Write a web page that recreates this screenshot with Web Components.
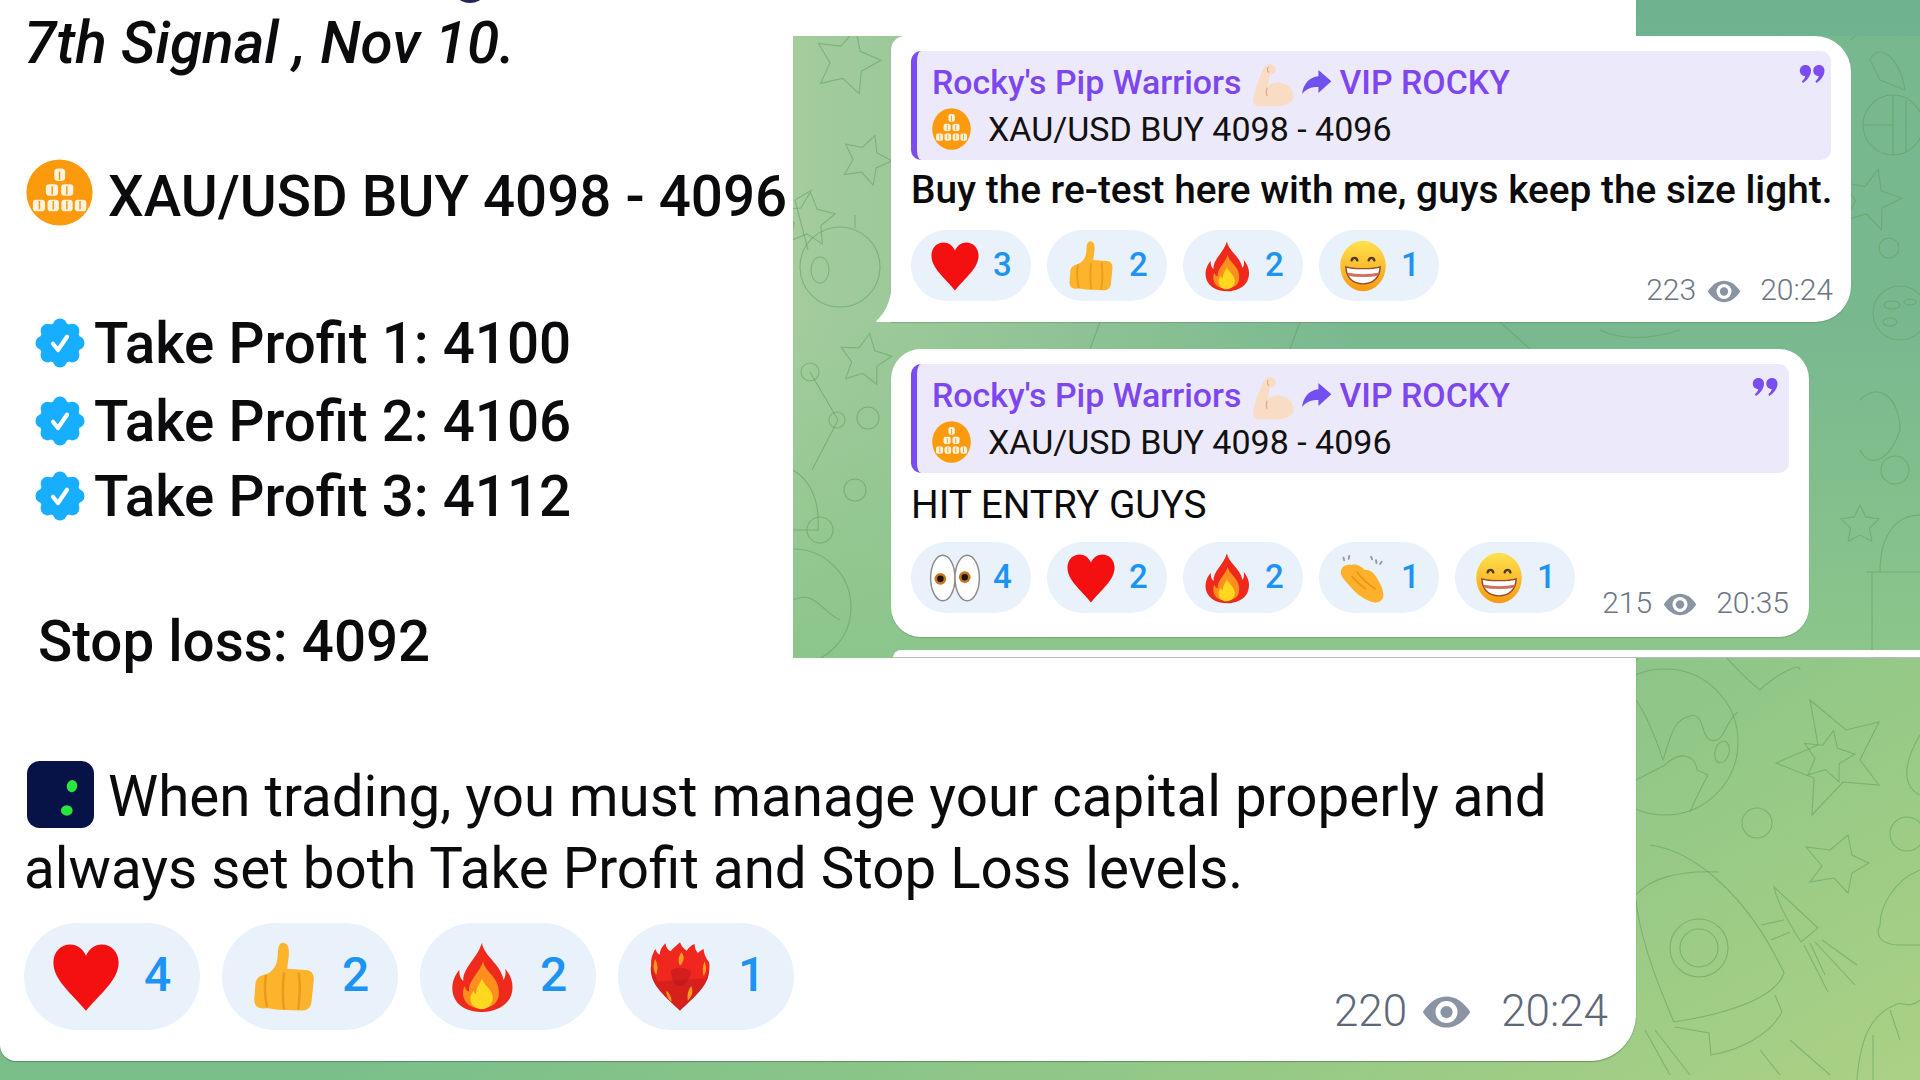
<!DOCTYPE html>
<html>
<head>
<meta charset="utf-8">
<title>7th Signal</title>
<style>
  html, body { margin: 0; padding: 0; background: #8cc58b; overflow: hidden; }
  body { font-family: Roboto, "Liberation Sans", sans-serif; }
</style>
</head>
<body>
<app-stage>
  <signal-bubble>
    <text-line slot="lines" gap="17" pad="24" top="7" size="58.500" style="font-style:italic;font-weight:500"><span>7th Signal , Nov 10.</span></text-line>
    <text-line slot="lines" gap="15" pad="26" top="82" size="56.500" style="font-weight:500"><emoji-icon name="gold" style="--w:67px;--h:67px;margin-bottom:9px"></emoji-icon><span>XAU/USD BUY 4098 - 4096</span></text-line>
    <text-line slot="lines" gap="9" pad="35" top="75" size="56.500" style="font-weight:500"><emoji-icon name="verified" style="--w:50px;--h:50px;margin-bottom:3px"></emoji-icon><span>Take Profit 1: 4100</span></text-line>
    <text-line slot="lines" gap="9" pad="35" top="6" size="56.500" style="font-weight:500"><emoji-icon name="verified" style="--w:50px;--h:50px;margin-bottom:3px"></emoji-icon><span>Take Profit 2: 4106</span></text-line>
    <text-line slot="lines" gap="9" pad="35" top="3" size="56.500" style="font-weight:500"><emoji-icon name="verified" style="--w:50px;--h:50px;margin-bottom:3px"></emoji-icon><span>Take Profit 3: 4112</span></text-line>
    <text-line slot="lines" gap="0" pad="38" top="73" size="56.500" style="font-weight:500"><span>Stop loss: 4092</span></text-line>
    <note-text slot="note"><emoji-icon name="dots" style="--w:67px;--h:67px"></emoji-icon> When trading, you must manage your capital properly and always set both Take Profit and Stop Loss levels.</note-text>
    <reaction-chip slot="chips" size="big" icon="heart" count="4"></reaction-chip>
    <reaction-chip slot="chips" size="big" icon="thumb" count="2"></reaction-chip>
    <reaction-chip slot="chips" size="big" icon="fire" count="2"></reaction-chip>
    <reaction-chip slot="chips" size="big" icon="heartfire" count="1"></reaction-chip>
    <view-meta slot="meta" views="220" time="20:24" size="big"></view-meta>
  </signal-bubble>

  <quoted-panel slot="over">
    <chat-bubble tail style="--bubble-w:960px;--bubble-h:286px;--text-weight:500;--text-top:9px;--chip-top:19px;--meta-top:45px;--meta-right:-2px;--rad:14px 36px 36px 0">
      <reply-box slot="reply" style="--quote-right:6px"></reply-box>
      <span slot="text">Buy the re-test here with me, guys keep the size light.</span>
      <reaction-chip slot="chips" icon="heart" count="3"></reaction-chip>
      <reaction-chip slot="chips" icon="thumb" count="2"></reaction-chip>
      <reaction-chip slot="chips" icon="fire" count="2"></reaction-chip>
      <reaction-chip slot="chips" icon="grin" count="1"></reaction-chip>
      <view-meta slot="meta" views="223" time="20:24"></view-meta>
    </chat-bubble>
    <chat-bubble style="--bubble-w:918px;--bubble-h:288px;--text-weight:400;--text-top:11px;--chip-top:16px;--meta-top:46px;--rad:30px;--gap-top:27px">
      <reply-box slot="reply" style="--quote-right:11px"></reply-box>
      <span slot="text">HIT ENTRY GUYS</span>
      <reaction-chip slot="chips" icon="eyes" count="4"></reaction-chip>
      <reaction-chip slot="chips" icon="heart" count="2"></reaction-chip>
      <reaction-chip slot="chips" icon="fire" count="2"></reaction-chip>
      <reaction-chip slot="chips" icon="clap" count="1"></reaction-chip>
      <reaction-chip slot="chips" icon="grin" count="1"></reaction-chip>
      <view-meta slot="meta" views="215" time="20:35"></view-meta>
    </chat-bubble>
  </quoted-panel>
</app-stage>

<script>
// all emoji artwork lives here, every one on a 32x32 box
const EMOJI = {
  heart: `<path fill="#f41010" d="M16 31C10 23.500 1.500 17.500 1.500 9.500 1.500 4.700 5 1.500 9 1.500c3 0 5.600 1.800 7 5 1.400-3.200 4-5 7-5 4 0 7.500 3.200 7.500 8C30.500 17.500 22 23.500 16 31Z"/>`,
  thumb: `<path fill="#fdb42c" d="M15.500.8c2.300 0 3 2.500 2.600 6l-.7 5.500 8.400.6c2.700.2 3.700 2.300 3.400 4.800l-1 9.500c-.3 2.700-2.200 3.800-4.600 3.700l-10.600-.4c-1.600-.1-2.600-.5-4.500-.6C5 30.200 2.600 29.500 2.800 25.500l.5-6.500c.2-2.500 2-3.500 4-4 3.200-.9 5.700-3.800 5.900-8.500.1-3 .4-5.700 2.300-5.700Z"/><path fill="none" stroke="#ea9a1e" stroke-width="1.100" d="M16 14c-.6 5-.7 11 0 16.500M22.500 14c.8 5 .6 11-.2 16.500M8 15c-.7 4-.5 10 .5 14.500"/>`,
  fire: `<path fill="#ef2a1c" d="M16 .8c.8 6 8 9 9.600 16.500 1-1.800 1-3.500.7-5 3.200 3.500 4.200 8.500 2.300 12.700C26.700 29 21.500 31.500 16 31.500 10 31.500 5 29 3.400 24.500 1.800 20 3.600 15.500 6 12.800c-.2 2 .3 3.800 1.700 5C7.300 12 13.800 8 16 .8Z"/><path fill="#ff8f1c" d="M16.500 9c.5 4 5 6 6.500 10.500 1 3.800.5 6.500-1.500 8.500-3 2.500-8.500 2.500-11.500.3-2.500-2-3-5.300-1.800-8.300.3 1.200.9 2 2 2.500C9.800 17.500 15 14 16.500 9Z"/><path fill="#ffd81f" d="M16 16.500c.5 2.800 4.200 4.500 4.800 8 .4 3.500-2.200 5.800-5 5.800s-5.300-2-4.900-5.300c.2-1.300.7-2.200 1.500-3 .1.800.4 1.400 1 1.700-.2-3 1.700-4.700 2.600-7.200Z"/>`,
  heartfire: `<path fill="#d6201c" d="M16 31C10 25 3 20 3 12.500 3 9 5.500 6.500 9 6.500c3 0 5.600 1.500 7 4 1.400-2.500 4-4 7-4 3.500 0 6 2.500 6 6C29 20 22 25 16 31Z"/><path fill="#f0271e" d="M4 13C2 9 4 5.500 5 3.500c.5 1.200 1 2 2 2.500 0-2 1-3.500 2.500-5 .3 2 1.200 3 2.200 3.500C13 3 14.500 2 16 .5c.6 1.800 1.800 3 3 3.800.8-1.200 1.600-2.300 3.500-3 0 1.700.5 3 1.500 4 .8-.7 1.500-1.200 2.500-1.700 0 2 1 4 2.500 6 .4 3-.5 5-2 7L6 18Z"/><path fill="#ff9b20" d="M16.500 5c1.700 1.500 1.500 4-.5 6-1-2-.7-4 .5-6ZM5 8c1 2 1.500 4 .5 7C4 13 4 10.500 5 8ZM27 9c.7 2.500 1 4.500-.5 6.500C25.800 13 26 11 27 9ZM21 20c1 2.300.5 4.500-1.500 6.500-.5-2.500 0-4.700 1.500-6.500ZM10 22c1.500 1.500 2.200 3 2.300 5-1.600-1.200-2.500-3-2.300-5Z"/><path fill="#b8161a" d="M12 13c3-1.500 6-1.500 9 .5-.5 3-2.500 6-5 6.500s-4-3.500-4-7Z" opacity=".5"/>`,
  grin: `<ellipse cx="16" cy="16" rx="14" ry="15.500" fill="url(#grinfill)"/><defs><linearGradient id="grinfill" x1="0" y1="0" x2="0" y2="1"><stop offset="0" stop-color="#ffe24e"/><stop offset="1" stop-color="#f79a12"/></linearGradient></defs><path fill="none" stroke="#4e3a1c" stroke-width="1.500" stroke-linecap="round" d="M9 12.500c.6-2 2.900-2 3.500 0M19.500 12.500c.6-2 2.900-2 3.500 0"/><path fill="#fff" stroke="#9a4a28" stroke-width=".900" d="M5.500 16.500c4 1.500 17 1.500 21 0 0 6.500-4.200 10.500-10.500 10.500S5.500 23 5.500 16.500Z"/><path fill="none" stroke="#d0705c" stroke-width="1.600" d="M6.700 21c5 1.200 13.600 1.200 18.600 0"/>`,
  eyes: `<ellipse cx="8.500" cy="16" rx="7.500" ry="14" fill="#fff" stroke="#8c8c8c" stroke-width=".900"/><ellipse cx="23.500" cy="16" rx="7.500" ry="14" fill="#fff" stroke="#8c8c8c" stroke-width=".900"/><circle cx="7" cy="16.500" r="3.600" fill="#c5771c"/><circle cx="7" cy="16.500" r="2" fill="#1e1208"/><circle cx="22" cy="15.500" r="3.600" fill="#c5771c"/><circle cx="22" cy="15.500" r="2" fill="#1e1208"/>`,
  clap: `<path fill="#fdb02a" d="M2.500 11C3.500 8.500 6 7.500 9 8c3-1 6 1 8 3 3-.5 6 2 7.500 5 2 3 3.500 6 4 9.500.5 3.500-2 6-5.500 5.500-5-1-10.500-4.500-15-10C5 17.500 1.500 14.500 2.500 11Z"/><path fill="none" stroke="#e8941c" stroke-width="1" d="M12 12c3 4 7 8 12 11M9 15c3 3 6 6 9 8"/><path fill="none" stroke="#9a9a9a" stroke-width="1.200" stroke-linecap="round" d="M4 3.500l.4 1.600M7.500 2.500l-.3 1.700M24 5l.3 1.800M27.500 6l-1 1.400M21 3l.6 1.500"/>`,
  muscle: `<path fill="#f9dcc4" d="M13 1C16 .3 19 2 18.500 5 18 7.500 16 8.500 14.500 8.500L13 17c3-2.500 6-3.200 9.500-2.500 5 1 8.500 5 8.500 9.500 0 5-5 7.500-12 7.500H8c-3.500 0-5.500-2-5-5.500C4 19 7 11 9.500 5.500 10 3.500 11.500 1.500 13 1Z"/><path fill="none" stroke="#dba985" stroke-width=".800" d="M13.500 3c-1 1-1 3 .5 4M12.500 18c-.6 2-.6 4 0 6"/>`,
  gold: `<circle cx="16" cy="16" r="15.800" fill="#fc9a0e"/><g fill="#fff3df"><rect x="13.500" y="4.500" width="5.200" height="6" rx="1.800"/><rect x="9.500" y="12" width="5.800" height="5.500" rx="1.500"/><rect x="16.800" y="12" width="5.800" height="5.500" rx="1.500"/><rect x="3.300" y="19.500" width="5.800" height="5.500" rx="1.500"/><rect x="10.300" y="19.500" width="5.400" height="5.500" rx="1.500"/><rect x="16.900" y="19.500" width="5.400" height="5.500" rx="1.500"/><rect x="23.300" y="19.500" width="5.500" height="5.500" rx="1.500"/></g><g fill="none" stroke="#fc9a0e" stroke-width=".700"><path d="M16 6v4M12.500 13v4M19.500 13v4M6.400 20v4M13 20v4M19.500 20v4M25.800 20v4"/></g>`,
  verified: `<g fill="#17aeff"><circle cx="16" cy="16" r="13.200"/><circle cx="16" cy="4.800" r="4.500"/><circle cx="23.900" cy="8.100" r="4.500"/><circle cx="27.200" cy="16" r="4.500"/><circle cx="23.900" cy="23.900" r="4.500"/><circle cx="16" cy="27.200" r="4.500"/><circle cx="8.100" cy="23.900" r="4.500"/><circle cx="4.800" cy="16" r="4.500"/><circle cx="8.100" cy="8.100" r="4.500"/></g><path fill="none" stroke="#fff" stroke-width="2.700" stroke-linecap="round" stroke-linejoin="round" d="M11.500 16.500l3.200 4 5.800-8.500"/>`,
  dots: `<rect width="32" height="32" rx="6" fill="#071247"/><ellipse cx="21.500" cy="12" rx="2.500" ry="2.900" fill="#2be53f" transform="rotate(15 21.500 12)"/><ellipse cx="19" cy="23.600" rx="2.800" ry="2.500" fill="#2be53f"/>`
};

class EmojiIcon extends HTMLElement {
  connectedCallback() {
    const name = this.getAttribute('name');
    this.attachShadow({ mode: 'open' }).innerHTML = `
      <style>
        :host { display: inline-block; flex: none; width: var(--w, 32px); height: var(--h, 32px); line-height: 0; }
        svg { width: 100%; height: 100%; display: block; }
      </style>
      <svg viewBox="0 0 32 32" preserveAspectRatio="none">${EMOJI[name] || ''}</svg>`;
  }
}
customElements.define('emoji-icon', EmojiIcon);

class TextLine extends HTMLElement {
  connectedCallback() {
    const a = (n) => this.getAttribute(n);
    this.attachShadow({ mode: 'open' }).innerHTML = `
      <style>
        :host { display: flex; align-items: center; height: 72px; color: #0b0b0d; white-space: nowrap;
                gap: ${a('gap')}px; padding-left: ${a('pad')}px; margin-top: ${a('top')}px; font-size: ${a('size')}px; }
      </style><slot></slot>`;
  }
}
customElements.define('text-line', TextLine);

class NoteText extends HTMLElement {
  constructor() {
    super();
    this.attachShadow({ mode: 'open' }).innerHTML = `
      <style>
        :host { display: block; font-size: 56.500px; line-height: 72px; color: #0b0b0d; margin-top: 83px; padding: 0 28px 0 24px; }
        ::slotted(emoji-icon) { vertical-align: -12px; margin: 0 0 0 3px; }
      </style><slot></slot>`;
  }
}
customElements.define('note-text', NoteText);

class ReactionChip extends HTMLElement {
  connectedCallback() {
    const big = this.getAttribute('size') === 'big';
    const icon = this.getAttribute('icon');
    const count = this.getAttribute('count');
    this.attachShadow({ mode: 'open' }).innerHTML = `
      <style>
        :host { display: flex; align-items: center; flex: none; background: #e9f1fb;
                width: ${big ? 176 : 120}px; height: ${big ? 107 : 71}px; border-radius: ${big ? 54 : 36}px;
                padding-left: ${big ? 26 : 18}px; box-sizing: border-box; }
        emoji-icon { --w: ${big ? 72 : 52}px; --h: ${big ? 72 : 52}px; }
        span { margin: 0 0 ${big ? 4 : 2}px ${big ? 22 : 12}px; color: #1d93f3; font-weight: 500; font-size: ${big ? 48 : 33}px; line-height: 1; }
      </style>
      <emoji-icon name="${icon}"></emoji-icon><span>${count}</span>`;
  }
}
customElements.define('reaction-chip', ReactionChip);

class ViewMeta extends HTMLElement {
  connectedCallback() {
    const big = this.getAttribute('size') === 'big';
    this.attachShadow({ mode: 'open' }).innerHTML = `
      <style>
        :host { display: flex; align-items: center; color: ${big ? '#5d6879' : '#6b7585'}; font-weight: 300; white-space: nowrap;
                font-size: ${big ? 44 : 30}px; line-height: 1; }
        svg { width: ${big ? 49 : 34}px; height: ${big ? 34 : 23}px; margin: 2px ${big ? 30 : 19}px 0 ${big ? 15 : 11}px; }
      </style>
      <span>${this.getAttribute('views')}</span>
      <svg viewBox="0 0 32 22"><path fill="#8a94a3" d="M.5 11C5 4 10.500.8 16 .8S27 4 31.500 11C27 18 21.500 21.200 16 21.200S5 18 .5 11Z"/><circle cx="16" cy="11" r="7.200" fill="#fff"/><circle cx="16" cy="11" r="4" fill="#8a94a3"/></svg>
      <span>${this.getAttribute('time')}</span>`;
  }
}
customElements.define('view-meta', ViewMeta);

class ReplyBox extends HTMLElement {
  connectedCallback() {
    this.attachShadow({ mode: 'open' }).innerHTML = `
      <style>
        :host { display: block; position: relative; background: #ece9fa; border-left: 6px solid #7c4cf3; border-radius: 10px;
                height: 109px; box-sizing: border-box; padding: 11px 0 0 15px; white-space: nowrap; }
        .name { display: flex; align-items: center; height: 40px; color: #7d46ef; font-size: 33.900px; font-weight: 500; }
        .name emoji-icon { --w: 46px; --h: 44px; margin: 5px 6px 0 8px; }
        .name svg { width: 31px; height: 26px; margin-right: 7px; }
        .msg { display: flex; align-items: center; height: 42px; margin-top: 6px; color: #111; font-size: 34px; }
        .msg emoji-icon { --w: 39px; --h: 42px; margin-right: 17px; }
        .quote { position: absolute; top: 14px; right: var(--quote-right, 6px); width: 26px; height: 18px; fill: #7c4cf3; }
      </style>
      <div class="name"><span>Rocky's Pip Warriors</span><emoji-icon name="muscle"></emoji-icon><svg viewBox="0 0 24 20"><path fill="#7150ef" d="M13.500.8 23.500 9.500 13.500 18.500V13.800C8 13.800 4 15.200.8 19.200 1.800 11.500 6.500 6 13.500 5.500Z"/></svg><span>VIP ROCKY</span></div>
      <div class="msg"><emoji-icon name="gold"></emoji-icon><span>XAU/USD BUY 4098 - 4096</span></div>
      <svg class="quote" viewBox="0 0 26 18"><path d="M6.500 0C10 0 12 2.500 12 5.500 12 10.500 8.500 15 4 18L2.800 16.200C4.800 14.500 6 12.800 6.300 11 2.800 11 .8 8.500.8 5.500S3 0 6.500 0ZM20 0c3.500 0 5.500 2.500 5.500 5.500 0 5-3.500 9.500-8 12.500l-1.200-1.800c2-1.700 3.200-3.400 3.500-5.200-3.500 0-5.500-2.500-5.500-5.500S16.500 0 20 0Z"/></svg>`;
  }
}
customElements.define('reply-box', ReplyBox);

class ChatBubble extends HTMLElement {
  constructor() {
    super();
    this.attachShadow({ mode: 'open' }).innerHTML = `
      <style>
        :host { display: block; position: relative; box-sizing: border-box; background: #fff;
                width: var(--bubble-w); height: var(--bubble-h); margin-top: var(--gap-top, 0);
                border-radius: var(--rad); padding: 15px 20px 0; box-shadow: 0 1px 1px rgba(40,90,50,.25); }
        .text { font-size: 38.800px; line-height: 42px; color: #0b0b0d; margin-top: var(--text-top); white-space: nowrap;
                font-weight: var(--text-weight); height: 42px; }
        .bottom { display: flex; align-items: flex-start; justify-content: space-between; margin-top: var(--chip-top); }
        .chips { display: flex; gap: 16px; }
        .meta { margin-top: var(--meta-top); margin-right: var(--meta-right, 0); }
        .tail { display: none; position: absolute; left: -15px; bottom: 0; width: 16px; height: 36px; }
        :host([tail]) .tail { display: block; }
      </style>
      <slot name="reply"></slot>
      <div class="text"><slot name="text"></slot></div>
      <div class="bottom">
        <div class="chips"><slot name="chips"></slot></div>
        <div class="meta"><slot name="meta"></slot></div>
      </div>
      <svg class="tail" viewBox="0 0 16 36"><path fill="#fff" d="M16 0V36H1C.2 36 0 35 .6 34.400 8 28 14 18 16 0Z"/></svg>`;
  }
}
customElements.define('chat-bubble', ChatBubble);

// doodle wallpaper helpers, coordinates are page coordinates
function star(cx, cy, r, rot = 0, inner = 0.45) {
  let pts = [];
  for (let i = 0; i < 10; i++) {
    const a = (rot + i * 36 - 90) * Math.PI / 180;
    const rr = i % 2 ? r * inner : r;
    pts.push((cx + rr * Math.cos(a)).toFixed(1) + ',' + (cy + rr * Math.sin(a)).toFixed(1));
  }
  return `<polygon points="${pts.join(' ')}"/>`;
}
const circ = (x, y, r) => `<circle cx="${x}" cy="${y}" r="${r}"/>`;
const line = (d) => `<path d="${d}"/>`;

const PAGE_DOODLES = [
  circ(1665, 742, 73),
  line('M1636 700C1650 720 1658 745 1663 760C1670 740 1672 720 1690 716C1705 712 1700 735 1710 740C1725 745 1725 720 1738 712'),
  line('M1636 780L1665 765C1680 750 1695 755 1697 770L1708 775C1700 790 1695 800 1690 812'),
  `<ellipse cx="1722" cy="752" rx="7" ry="11" transform="rotate(15 1722 752)"/>`,
  `<polygon points="1810,700 1846,730 1879,722 1860,760 1879,785 1843,782 1812,815 1814,778 1776,763 1818,745"/>`,
  star(1828, 757, 27, 12, 0.48),
  circ(1757, 823, 15), circ(1907, 834, 17),
  `<polygon points="1848,835 1852,855 1869,863 1852,873 1848,893 1834,878 1810,882 1822,866 1806,847 1830,850"/>`,
  line('M1650 845C1690 850 1745 890 1784 973C1775 1000 1720 1015 1674 1022C1660 990 1640 940 1636 900'),
  line('M1636 895C1650 878 1680 870 1719 872'),
  line('M1675 1027L1709 1033L1711 1055C1740 1050 1770 1035 1782 1012L1775 995'),
  circ(1699, 948, 29), circ(1699, 948, 19),
  line('M1774 887L1818 928L1801 942C1790 925 1778 905 1774 887ZM1761 925L1784 920M1771 940L1790 932M1804 945L1828 992M1810 943L1825 975M1822 940L1857 965M1815 942L1855 985'),
  line('M1645 1030L1670 1075M1655 1030L1690 1075M1790 1040L1830 1075M1760 1050L1780 1075'),
  line('M1920 870C1895 880 1880 905 1880 925C1875 935 1880 945 1900 945L1920 945'),
  line('M1920 735C1905 760 1900 785 1920 795'),
  line('M1857 1080C1860 1040 1870 1015 1895 1005C1900 1000 1910 1010 1920 1000M1890 1010L1900 1040M1873 1035V1080'),
  line('M1636 660C1700 600 1720 660 1760 690C1770 680 1800 660 1800 670')
].join('');

const PANEL_DOODLES = [
  star(847, 62, 34, 15, 0.5), star(865, 360, 27, 10, 0.5), star(1870, 200, 32, 15, 0.45),
  star(808, 220, 28, 5, 0.5), star(866, 160, 26, 20, 0.5),
  circ(840, 267, 40), `<ellipse cx="820" cy="270" rx="9" ry="13"/>`, line('M808 250L795 200L812 190M855 228L855 215'),
  circ(868, 418, 11), circ(855, 490, 11), circ(810, 372, 9), circ(837, 420, 8),
  line('M810 372L838 420L812 470M793 470C810 480 820 500 818 530H793'), circ(820, 530, 13),
  circ(793, 607, 58), line('M793 600C815 590 820 610 840 620'),
  line('M1870 60C1880 40 1900 60 1905 90L1880 80ZM1850 40L1880 20M1900 36L1915 20'),
  circ(1893, 125, 30), line('M1893 95V155M1863 125H1893M1906 100V152'),
  circ(1889, 248, 10), circ(1900, 313, 27), `<ellipse cx="1892" cy="305" rx="8" ry="4"/><ellipse cx="1910" cy="302" rx="6" ry="3"/><ellipse cx="1890" cy="322" rx="7" ry="4"/>`,
  line('M1866 572H1920M1872 572V650M1880 572C1880 530 1900 515 1920 515'),
  line('M1860 400C1880 380 1900 400 1900 430C1890 460 1870 470 1860 450'), star(1860, 525, 20, 0, 0.5),
  circ(1895, 470, 14),
  line('M1100 322L1090 349M1300 322L1290 349M1500 322L1530 349M1600 330C1620 340 1650 340 1680 330')
].join('');

class DoodleBg extends HTMLElement {
  connectedCallback() {
    const box = this.getAttribute('box');
    const art = this.getAttribute('art') === 'panel' ? PANEL_DOODLES : PAGE_DOODLES;
    this.attachShadow({ mode: 'open' }).innerHTML = `
      <style>
        :host { display: block; position: absolute; inset: 0; }
        svg { display: block; width: 100%; height: 100%; fill: none; stroke: #5f9e5c; stroke-opacity: .55; stroke-width: 1.100; }
      </style>
      <svg viewBox="${box}">${art}</svg>`;
  }
}
customElements.define('doodle-bg', DoodleBg);

class SignalBubble extends HTMLElement {
  constructor() {
    super();
    this.attachShadow({ mode: 'open' }).innerHTML = `
      <style>
        :host { display: flow-root; position: relative; background: #fff; width: 1636px; height: 1061px; box-sizing: border-box;
                border-radius: 0 0 46px 16px; box-shadow: 0 1px 1px rgba(40,80,50,.45); }
        .descender { position: absolute; left: 458px; top: -10px; width: 24px; height: 13px; background: #25245a; border-radius: 50%; clip-path: inset(10px 0 0 0); }
        .bottom { display: flex; justify-content: space-between; align-items: flex-start; margin-top: 18px; padding: 0 28px 0 24px; }
        .chips { display: flex; gap: 22px; }
        .meta { margin-top: 66px; }
      </style>
      <div class="descender"></div>
      <div class="lines"><slot name="lines"></slot></div>
      <slot name="note"></slot>
      <div class="bottom">
        <div class="chips"><slot name="chips"></slot></div>
        <div class="meta"><slot name="meta"></slot></div>
      </div>`;
  }
}
customElements.define('signal-bubble', SignalBubble);

class QuotedPanel extends HTMLElement {
  constructor() {
    super();
    this.attachShadow({ mode: 'open' }).innerHTML = `
      <style>
        :host { display: block; position: absolute; left: 793px; top: 36px; width: 1127px; height: 622px; overflow: hidden; box-sizing: border-box;
                padding-left: 98px;
                background: linear-gradient(to top, #8cc68b 0, rgba(140,198,139,0) 55%), linear-gradient(90deg, #a4cc9d, #78b88f 50%); }
        .content { position: relative; }
        .next { position: absolute; left: 100px; right: 0; top: 614px; height: 8px; background: #fff; border-radius: 10px 0 0 0; border-bottom: 1px solid #b9bdb9; box-sizing: border-box; }
      </style>
      <doodle-bg art="panel" box="793 36 1127 622"></doodle-bg>
      <div class="content"><slot></slot></div>
      <div class="next"></div>`;
  }
}
customElements.define('quoted-panel', QuotedPanel);

class AppStage extends HTMLElement {
  constructor() {
    super();
    this.attachShadow({ mode: 'open' }).innerHTML = `
      <style>
        :host { display: block; position: relative; width: 1920px; height: 1080px; overflow: hidden;
                background: linear-gradient(to bottom, rgba(108,176,146,.85), rgba(108,176,146,0) 50%), linear-gradient(150deg, #7abf8a 58%, #abd184 100%); }
      </style>
      <doodle-bg art="page" box="0 0 1920 1080"></doodle-bg>
      <slot></slot>
      <slot name="over"></slot>`;
  }
}
customElements.define('app-stage', AppStage);
</script>
</body>
</html>
